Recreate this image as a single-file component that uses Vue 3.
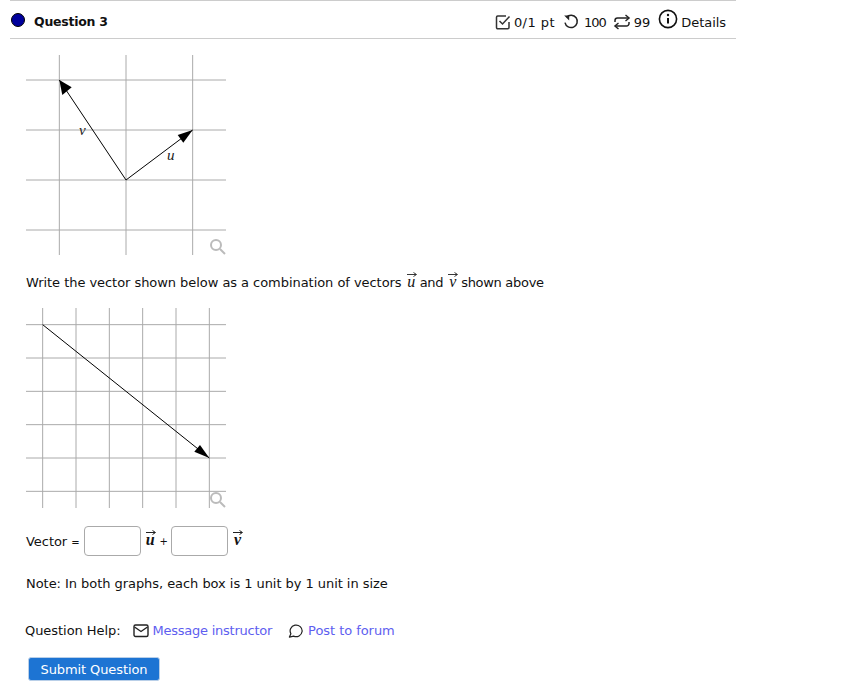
<template>
  <div class="page">
    <div class="question">
      <div class="header">
        <div class="title">
          <span class="dot"></span>
          <span class="name">Question 3</span>
        </div>
        <div class="meta">
          <svg class="ico check" viewBox="0 0 16 16" width="16" height="16">
            <path d="M14 8v5.5a1.2 1.2 0 0 1-1.2 1.2H2.7a1.2 1.2 0 0 1-1.2-1.2V3.2A1.2 1.2 0 0 1 2.7 2H11" fill="none" stroke="#333" stroke-width="1.5" />
            <path d="M4.5 7l3 3 7-7.5" fill="none" stroke="#333" stroke-width="1.5" />
          </svg>
          <span class="score">0/1 pt</span>
          <svg class="ico undo" viewBox="0 0 16 16" width="16" height="16">
            <path d="M3.5 3.2A6.2 6.2 0 1 1 2 8.6" fill="none" stroke="#222" stroke-width="1.5" />
            <path d="M1.2 1.6h5v5z" fill="#222" />
          </svg>
          <span class="tries hundred">100</span>
          <svg class="ico retry" viewBox="0 0 18 16" width="18" height="16">
            <path d="M2 8V6.5A2.5 2.5 0 0 1 4.5 4H16M16 8v1.5a2.5 2.5 0 0 1-2.5 2.5H2" fill="none" stroke="#222" stroke-width="1.5" />
            <path d="M12.5 1l3.6 3-3.6 3M5.5 9l-3.6 3 3.6 3" fill="none" stroke="#222" stroke-width="1.4" />
          </svg>
          <span class="tries">99</span>
          <svg class="ico info" viewBox="0 0 20 20" width="20" height="20">
            <circle cx="10" cy="10" r="8.6" fill="none" stroke="#111" stroke-width="1.6" />
            <circle cx="10" cy="6" r="1.2" fill="#111" />
            <path d="M10 9v5.5" stroke="#111" stroke-width="2" />
          </svg>
          <span class="details">Details</span>
        </div>
      </div>

      <div class="body">
        <svg class="graph first" width="200" height="200" viewBox="0 0 200 200">
          <path v-for="x in [33.33, 100, 166.67]" :key="'a' + x" :d="`M${x} 0V200`" class="gridline" />
          <path v-for="y in [25, 75, 125, 175]" :key="'b' + y" :d="`M0 ${y}H200`" class="gridline" />
          <path d="M100 125L33.33 25M100 125L166.67 75" stroke="#000" fill="none" />
          <path d="M33.33 25L45.7 32.3L36.3 40z" fill="#000" />
          <path d="M166.67 75L157.3 87.7L151.7 80z" fill="#000" />
          <text x="53" y="80" class="var">v</text>
          <text x="141" y="105" class="var">u</text>
          <g class="zoomer" transform="translate(184 184)">
            <circle cx="6" cy="6" r="5" />
            <path d="M10 10l5 5" />
          </g>
        </svg>

        <p class="prompt">
          Write the vector shown below as a combination of vectors
          <span class="vec">u<svg class="arrow" viewBox="0 0 10 5" width="10" height="5"><path d="M0 2.5H9M6.5 .5L9.5 2.5L6.5 4.5" fill="none" stroke="#222" stroke-width=".9" /></svg></span>
          <span class="tight">and</span>
          <span class="vec">v<svg class="arrow" viewBox="0 0 10 5" width="10" height="5"><path d="M0 2.5H9M6.5 .5L9.5 2.5L6.5 4.5" fill="none" stroke="#222" stroke-width=".9" /></svg></span>
          <span class="tight">shown above</span>
        </p>

        <svg class="graph second" width="200" height="200" viewBox="0 0 200 200">
          <path v-for="x in [16.67, 50, 83.33, 116.67, 150, 183.33]" :key="'c' + x" :d="`M${x} 0V200`" class="gridline" />
          <path v-for="y in [16.67, 50, 83.33, 116.67, 150, 183.33]" :key="'d' + y" :d="`M0 ${y}H200`" class="gridline" />
          <path d="M16.67 16.67L183.33 150" stroke="#000" fill="none" />
          <path d="M183.33 150L168.3 143.7L174 137z" fill="#000" />
          <g class="zoomer" transform="translate(184 184)">
            <circle cx="6" cy="6" r="5" />
            <path d="M10 10l5 5" />
          </g>
        </svg>

        <div class="answer">
          <span>Vector <span class="small">=</span></span>
          <input class="box" type="text" />
          <span class="vec bold">u<svg class="arrow" viewBox="0 0 10 5" width="10" height="5"><path d="M0 2.5H9M6.5 .5L9.5 2.5L6.5 4.5" fill="none" stroke="#222" stroke-width="1" /></svg></span>
          <span class="small plus">+</span>
          <input class="box" type="text" />
          <span class="vec bold">v<svg class="arrow" viewBox="0 0 10 5" width="10" height="5"><path d="M0 2.5H9M6.5 .5L9.5 2.5L6.5 4.5" fill="none" stroke="#222" stroke-width="1" /></svg></span>
        </div>

        <p class="note">Note: In both graphs, each box is 1 unit by 1 unit in size</p>
      </div>

      <div class="help">
        <span class="help-label">Question Help:</span>
        <svg class="help-ico" viewBox="0 0 16 16" width="16" height="16">
          <rect x="1" y="2" width="14" height="11.5" rx="1.5" fill="none" stroke="#222" stroke-width="1.4" />
          <path d="M1.5 4l6.5 4.5 6.5-4.5" fill="none" stroke="#222" stroke-width="1.4" />
        </svg>
        <a class="link narrow">Message instructor</a>
        <svg class="help-ico forum" viewBox="0 0 16 16" width="15" height="15">
          <path d="M1.5 15l1.6-3.6A6.4 6.2 0 1 1 6 14z" fill="none" stroke="#222" stroke-width="1.3" stroke-linejoin="round" />
        </svg>
        <a class="link">Post to forum</a>
      </div>

      <button class="submit" type="button">Submit Question</button>
    </div>
  </div>
</template>

<script setup>
</script>

<style>
body {
  background: #fff;
}
</style>

<style scoped>
.page {
  width: 856px;
  height: 698px;
  overflow: hidden;
  font-family: "DejaVu Sans", sans-serif;
  font-size: 13px;
  letter-spacing: -0.05px;
  color: #111;
}

.question {
  width: 726px;
  margin-left: 10px;
  border-top: 1px solid #ccc;
}

.header {
  display: flex;
  justify-content: space-between;
  align-items: center;
  height: 37px;
  border-bottom: 1px solid #ccc;
}

.title {
  display: flex;
  align-items: center;
  gap: 9px;
  padding-left: 1px;
  padding-top: 1px;
}

.dot {
  width: 12px;
  height: 12px;
  border-radius: 50%;
  background: #00009c;
  border: 0.5px solid #000;
}

.name {
  font-weight: 700;
  font-size: 12.5px;
  letter-spacing: -0.25px;
  position: relative;
  top: 1px;
}

.meta {
  display: flex;
  align-items: center;
  padding-right: 10px;
  padding-top: 4px;
}

.meta span {
  padding-top: 2px;
}

.score {
  letter-spacing: 0.45px;
}

.hundred {
  letter-spacing: -1px;
}

.ico {
  margin-right: 3px;
  margin-left: 9px;
}

.check {
  margin-left: 0;
  margin-right: 3px;
}

.undo {
  margin-left: 8px;
  margin-right: 5px;
}

.retry {
  margin-left: 7px;
  margin-right: 3px;
}

.info {
  margin-top: -6px;
  margin-left: 8px;
  margin-right: 3px;
}

.body {
  padding-left: 16px;
}

.graph {
  display: block;
}

.first {
  margin-top: 16px;
}

.second {
  margin-top: 17px;
}

.gridline {
  stroke: #aaa;
  stroke-width: 1;
}

.zoomer circle,
.zoomer path {
  fill: none;
  stroke: #bbb;
  stroke-width: 2;
}

.var {
  font-family: "Liberation Serif", serif;
  font-style: italic;
  font-size: 15px;
  fill: #222;
}

.prompt {
  margin: 18px 0 0;
  line-height: 17px;
}

.tight {
  letter-spacing: -0.3px;
  margin: 0 4px 0 3px;
}

.vec {
  position: relative;
  display: inline-block;
  width: 11px;
  text-align: center;
  font-family: "Liberation Serif", serif;
  font-style: italic;
  font-size: 16px;
  line-height: 17px;
}

.bold {
  font-weight: 700;
  top: -2px;
}

.arrow {
  position: absolute;
  left: 1px;
  top: -1px;
}

.answer {
  display: flex;
  align-items: center;
  gap: 4px;
  margin-top: 18px;
}

.small {
  font-size: 10px;
}

.plus {
  margin-right: -1px;
}

.box {
  width: 57px;
  height: 30px;
  box-sizing: border-box;
  border: 1px solid #aaa;
  border-radius: 4px;
  background: #fff;
  padding: 0;
}

.note {
  margin: 19px 0 0;
  line-height: 17px;
}

.help {
  display: flex;
  align-items: center;
  margin-top: 30px;
  padding-left: 15px;
  line-height: 17px;
}

.help-label {
  margin-right: 12px;
}

.help-ico {
  margin-right: 4px;
}

.forum {
  margin-left: 16px;
  margin-right: 5px;
}

.link {
  color: #5e5ef0;
}

.narrow {
  letter-spacing: -0.25px;
}

.submit {
  display: block;
  margin: 18px 0 0 18px;
  width: 132px;
  height: 24px;
  padding: 0;
  border: 1px solid #b9cfe8;
  border-radius: 3px;
  background: #1d74d3;
  color: #fff;
  font-family: inherit;
  font-size: 13px;
  font-weight: 500;
  letter-spacing: -0.1px;
}
</style>
